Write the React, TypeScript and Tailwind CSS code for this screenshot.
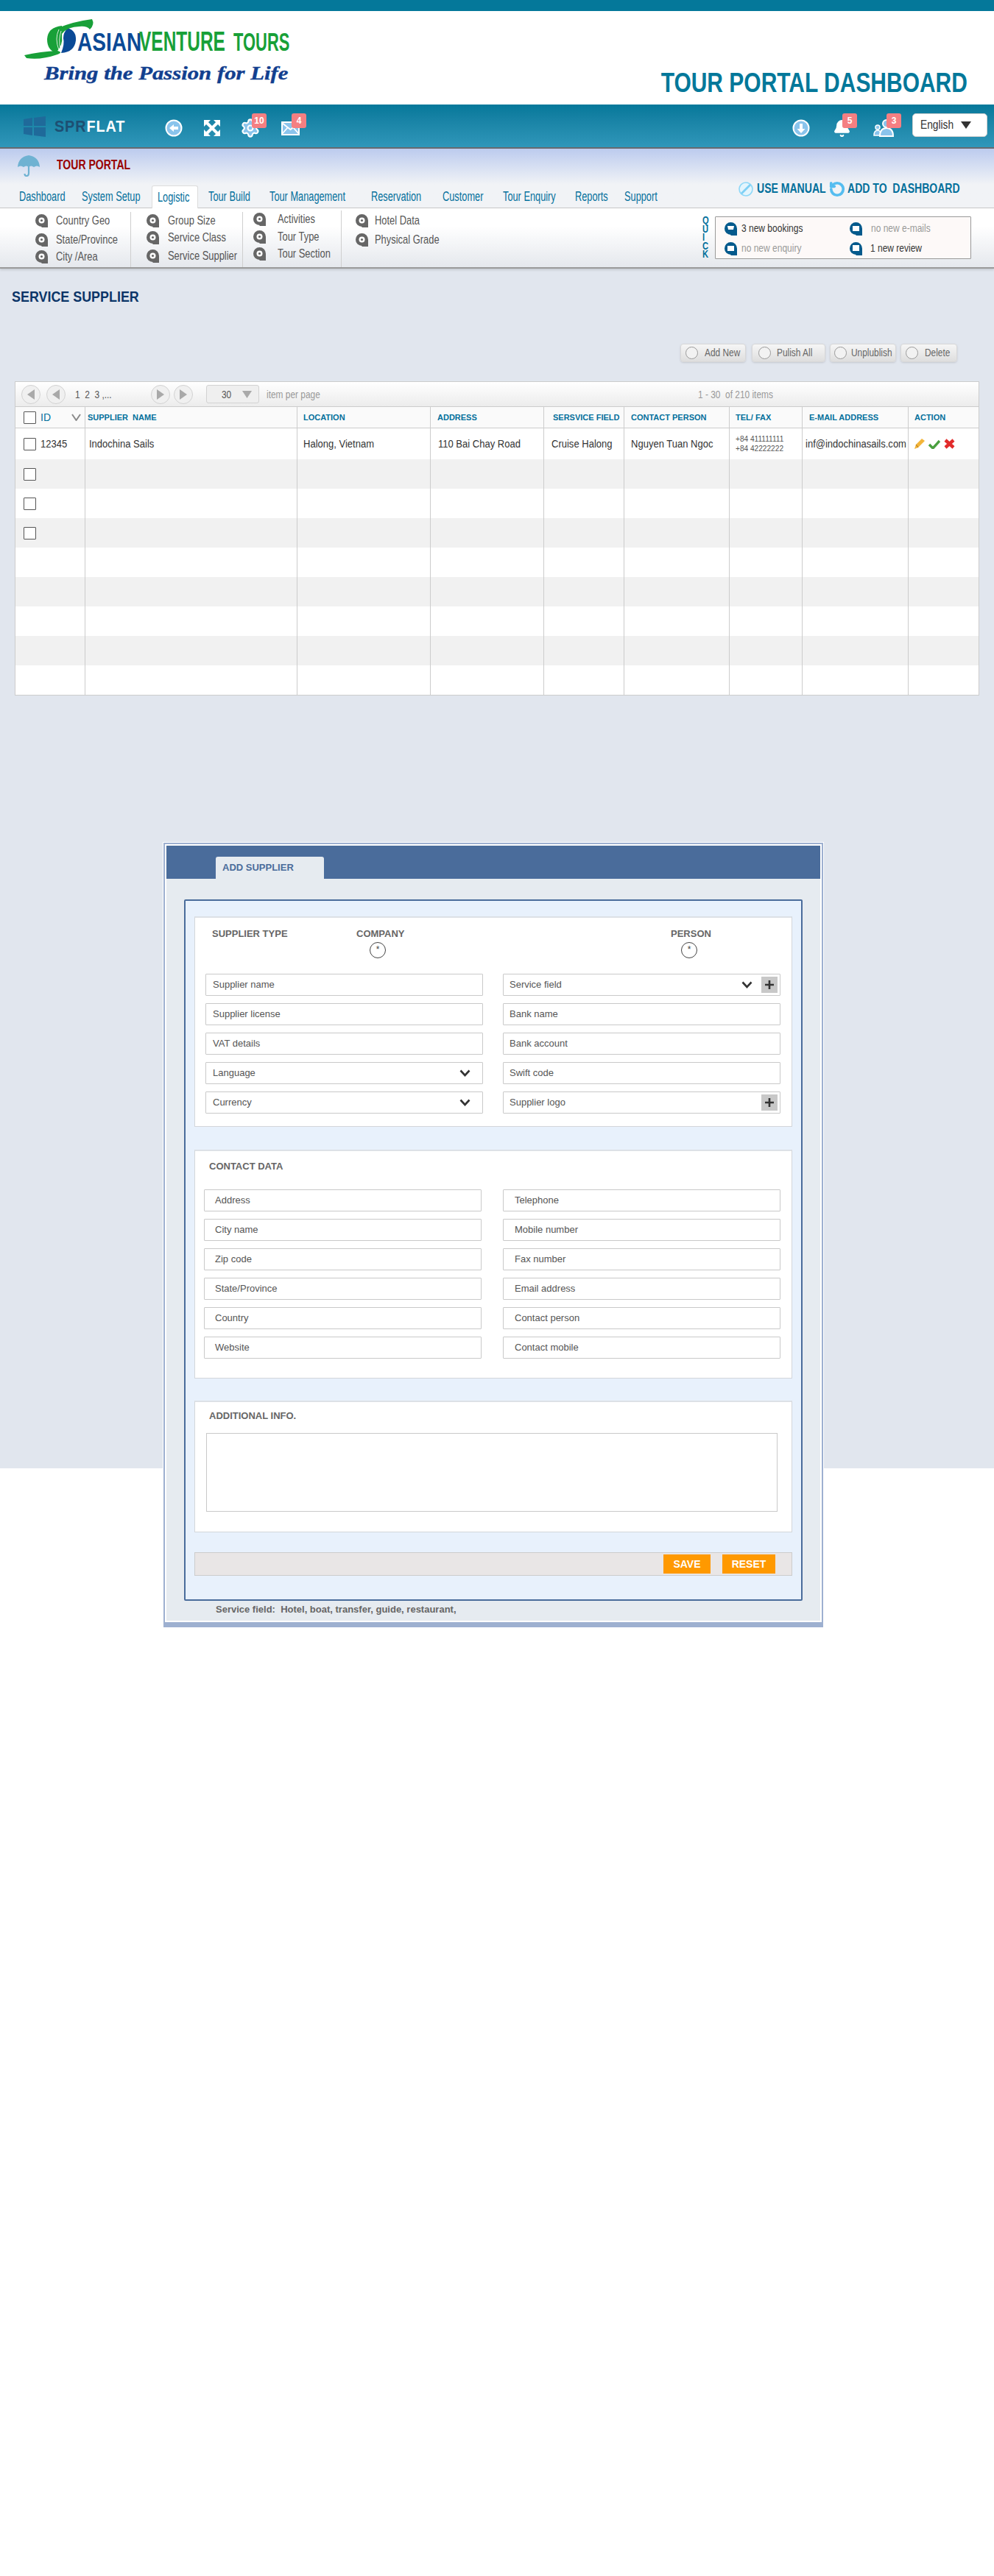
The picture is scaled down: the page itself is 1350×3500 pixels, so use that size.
import React from 'react';
import { Bell, RotateCcw, Settings } from 'lucide-react';

const navTabs = [
  { label: 'Dashboard', cell: 'w-[85px]' },
  { label: 'System Setup', cell: 'w-[95px]' },
  { label: 'Logistic', cell: 'w-[63px]', active: true },
  { label: 'Tour Build', cell: 'w-[83px] ml-[14px]' },
  { label: 'Tour Management', cell: 'w-[138px]' },
  { label: 'Reservation', cell: 'w-[97px]' },
  { label: 'Customer', cell: 'w-[82px]' },
  { label: 'Tour Enquiry', cell: 'w-[98px]' },
  { label: 'Reports', cell: 'w-[67px]' },
  { label: 'Support', cell: 'w-[80px]' },
];

const subMenus = [
  {
    col: 'w-[178px] pl-[48px] mt-[5px] border-r',
    gap: 'w-[11px]',
    items: [
      { label: 'Country Geo', cls: '' },
      { label: 'State/Province', cls: 'mt-[2px]' },
      { label: 'City /Area', cls: '-mt-px' },
    ],
  },
  {
    col: 'w-[152px] pl-[21px] mt-[5px] border-r',
    gap: 'w-[12px]',
    items: [
      { label: 'Group Size', cls: '' },
      { label: 'Service Class', cls: '-mt-px' },
      { label: 'Service Supplier', cls: 'mt-px' },
    ],
  },
  {
    col: 'w-[134px] pl-[14px] mt-[3px] border-r',
    gap: 'w-[16px]',
    items: [
      { label: 'Activities', cls: '' },
      { label: 'Tour Type', cls: '' },
      { label: 'Tour Section', cls: '-mt-px' },
    ],
  },
  {
    col: 'w-[150px] pl-[19px] mt-[5px]',
    gap: 'w-[9px]',
    items: [
      { label: 'Hotel Data', cls: '' },
      { label: 'Physical Grade', cls: 'mt-[2px]' },
    ],
  },
];

const companyFields = [
  { left: 'Supplier name', right: 'Service field', rightChevron: true, rightPlus: true },
  { left: 'Supplier license', right: 'Bank name' },
  { left: 'VAT details', right: 'Bank account' },
  { left: 'Language', leftChevron: true, right: 'Swift code' },
  { left: 'Currency', leftChevron: true, right: 'Supplier logo', rightPlus: true },
];

const contactFields = [
  ['Address', 'Telephone'],
  ['City name', 'Mobile number'],
  ['Zip code', 'Fax number'],
  ['State/Province', 'Email address'],
  ['Country', 'Contact person'],
  ['Website', 'Contact mobile'],
];

const tableCols = 'grid grid-cols-[94px_288px_181px_154px_109px_143px_99px_144px_1fr]';

function Cond({ children, className }: { children: React.ReactNode; className: string }) {
  return <span className={`inline-block shrink-0 whitespace-nowrap origin-left ${className}`}>{children}</span>;
}

function RowText({ children }: { children: React.ReactNode }) {
  return <Cond className="scale-x-[0.93] text-[14px] text-[#333]">{children}</Cond>;
}

function Logo() {
  return (
    <svg width="370" height="100" viewBox="30 20 370 100" className="ml-[30px] mt-[5px] shrink-0">
      <path d="M92 38 Q104 42 103 55 Q101 71 83 72 Q88 60 86 52 Q86 44 92 38Z" fill="#0b4a96" />
      <path d="M84 35 Q65 37 64 53 Q64 68 76 72 Q86 60 84 50 Q84 42 84 35Z" fill="#18a038" />
      <path d="M33 75 Q55 70 78 69 Q86 71 78 74 Q55 82 36 79Z" fill="#18a038" />
      <path d="M76 39 Q100 29 125 26 Q129 33 122 40 Q118 35 108 36 Q92 36 84 46 Q80 43 76 39Z" fill="#18a038" />
      <path d="M80 40 Q74 52 80 68 M83 42 Q79 54 82 66" stroke="#d8efdc" strokeWidth="1" fill="none" />
      <text transform="translate(105 69) scale(0.78 1)" fontSize="36" fontWeight="700" fontFamily="Liberation Sans" fill="#0b4a96">ASIAN</text>
      <text transform="translate(189 69) scale(0.68 1)" fontSize="36" fontWeight="700" fontFamily="Liberation Sans" fill="#18a038">VENTURE</text>
      <text transform="translate(317 69) scale(0.61 1)" fontSize="36" fontWeight="700" fontFamily="Liberation Sans" fill="#18a038">TOURS</text>
      <text transform="translate(60 108) scale(1.23 1)" fontSize="25" fontWeight="700" fontStyle="italic" fontFamily="Liberation Serif" fill="#123f8f" stroke="#123f8f" strokeWidth="0.4">Bring the Passion for Life</text>
    </svg>
  );
}

function Badge({ n, className }: { n: string; className: string }) {
  return (
    <span className={`absolute -top-2 flex h-5 w-5 items-center justify-center rounded-[3px] bg-[#f47f82] text-[12px] font-bold text-white ${className}`}>
      {n}
    </span>
  );
}

function Blob({ fill, children }: { fill: string; children?: React.ReactNode }) {
  return (
    <svg width="17" height="18" viewBox="0 0 17 18" className="shrink-0">
      <circle cx="8.5" cy="8.5" r="8.5" fill={fill} />
      <rect x="8.5" y="9" width="8.5" height="9" fill={fill} />
      {children}
    </svg>
  );
}

function Triangle({ dir }: { dir: 'left' | 'right' }) {
  return (
    <span className="flex h-[26px] w-[26px] shrink-0 items-center justify-center rounded-full border border-[#d2d2d2] bg-[#f0f0f0]">
      <svg width="10" height="14" viewBox="0 0 10 14">
        <path d={dir === 'left' ? 'M10 0 L0 7 L10 14Z' : 'M0 0 L10 7 L0 14Z'} fill="#a9a9a9" />
      </svg>
    </span>
  );
}

function Chevron() {
  return (
    <svg width="15" height="10" viewBox="0 0 15 10" className="shrink-0">
      <path d="M1.5 1.5 L7.5 8 L13.5 1.5" fill="none" stroke="#333" strokeWidth="2.6" />
    </svg>
  );
}

function PlusBox() {
  return (
    <span className="ml-[12px] flex h-[22px] w-[22px] shrink-0 items-center justify-center bg-[#c8c8c8]">
      <svg width="12" height="12" viewBox="0 0 12 12">
        <path d="M6 0 V12 M0 6 H12" stroke="#333" strokeWidth="2.6" />
      </svg>
    </span>
  );
}

function Field({ label, chevron, plus, pad }: { label: string; chevron?: boolean; plus?: boolean; pad: string }) {
  return (
    <div className={`flex h-[30px] items-center rounded-[1px] border border-[#c9c9c9] bg-white text-[13px] text-[#555] ${pad}`}>
      <span className="flex-1">{label}</span>
      {chevron && <Chevron />}
      {chevron && !plus && <span className="w-[16px]" />}
      {plus && <PlusBox />}
      {plus && <span className="w-[3px]" />}
    </div>
  );
}

function Radio() {
  return (
    <span className="flex h-[22px] w-[22px] justify-center rounded-full border border-[#444] bg-white pt-[2px] text-[12px] leading-[14px] font-normal text-[#444]">*</span>
  );
}

function ActionButton({ label, box, gap }: { label: string; box: string; gap: string }) {
  return (
    <div className={`flex h-[25px] items-center rounded-[4px] border border-[#d8d8d8] bg-linear-to-b from-[#f6f6f6] to-[#dedede] shadow-sm ${box}`}>
      <span className="h-[17px] w-[17px] shrink-0 rounded-full border border-[#999] bg-[#f2f2f2]" />
      <Cond className={`text-[14px] text-[#666] scale-x-[0.85] ${gap}`}>{label}</Cond>
    </div>
  );
}

function TableRow({ index }: { index: number }) {
  const first = index === 0;
  const bg = index % 2 === 1 ? 'bg-[#f1f1f1]' : 'bg-white';
  const cell = 'flex items-center border-l border-[#cccccc]';
  return (
    <div className={`${tableCols} ${first ? 'h-[42px]' : 'h-[40px]'} ${bg}`}>
      <div className="flex items-center pl-[11px]">
        {index < 4 && <span className="h-[17px] w-[17px] rounded-[1px] border border-[#555] bg-white" />}
        {first && <span className="ml-[6px]"><RowText>12345</RowText></span>}
      </div>
      <div className={`${cell} pl-[5px]`}>{first && <RowText>Indochina Sails</RowText>}</div>
      <div className={`${cell} pl-[8px]`}>{first && <RowText>Halong, Vietnam</RowText>}</div>
      <div className={`${cell} pl-[10px]`}>{first && <RowText>110 Bai Chay Road</RowText>}</div>
      <div className={`${cell} pl-[10px]`}>{first && <RowText>Cruise Halong</RowText>}</div>
      <div className={`${cell} pl-[9px]`}>{first && <RowText>Nguyen Tuan Ngoc</RowText>}</div>
      <div className={`${cell} pl-[8px]`}>
        {first && (
          <div className="flex flex-col text-[11px] leading-[13px] text-[#555]">
            <Cond className="scale-x-[0.92]">+84 411111111</Cond>
            <Cond className="scale-x-[0.92]">+84 42222222</Cond>
          </div>
        )}
      </div>
      <div className={`${cell} pl-[4px]`}>{first && <RowText>inf@indochinasails.com</RowText>}</div>
      <div className={`${cell} gap-[5px] pl-[8px]`}>
        {first && (
          <>
            <svg width="14" height="14" viewBox="0 0 14 14">
              <path d="M10 0 L14 3 L5 12 L0 14 L2 8Z" fill="#f3b53a" />
              <path d="M2 8 L5 12" stroke="#a8701b" strokeWidth="1" />
            </svg>
            <svg width="16" height="13" viewBox="0 0 16 13">
              <path d="M1 7 L6 12 L15 2" fill="none" stroke="#4a9f3f" strokeWidth="3.4" />
            </svg>
            <svg width="15" height="14" viewBox="0 0 15 14">
              <path d="M2 2 L13 12 M13 2 L2 12" fill="none" stroke="#e22b2b" strokeWidth="4.4" />
            </svg>
          </>
        )}
      </div>
    </div>
  );
}

export default function App() {
  return (
    <div className="font-['Liberation_Sans',sans-serif]">
      <div className="h-[15px] bg-[#04789a]" />

      {/* logo and title */}
      <header className="flex h-[127px] bg-white">
        <Logo />
        <div className="ml-auto mb-[7px] mr-[36px] flex h-[44px] items-center self-end">
          <span className="origin-right scale-x-[0.81] whitespace-nowrap text-[37px] font-bold text-[#04789a]">TOUR PORTAL DASHBOARD</span>
        </div>
      </header>

      {/* dark nav */}
      <div className="flex h-[60px] items-center border-b-2 border-[#666a70] bg-linear-to-b from-[#04789a] to-[#2f97ba] pb-[2px] pl-[32px] pr-[9px]">
        <svg width="30" height="28" viewBox="0 0 30 28" className="mt-[4px] shrink-0">
          <path d="M0 4 L12 2 V13 H0Z M14 2 L30 0 V13 H14Z M0 15 H12 V26 L0 24Z M14 15 H30 V28 L14 26Z" fill="#1f6a9a" />
        </svg>
        <div className="ml-[12px] flex w-[150px] items-center pt-[2px]">
          <Cond className="scale-x-[0.9] text-[22px] font-bold tracking-[1px]">
            <span className="text-[#1d4f73]">SPR</span>
            <span className="text-white">FLAT</span>
          </Cond>
        </div>
        <div className="relative mt-2 h-[24px] w-[22px]">
          <svg width="24" height="24" viewBox="0 0 24 24">
            <circle cx="12" cy="12" r="10.5" fill="#8ac4ec" stroke="#fff" strokeWidth="2" />
            <path d="M6 12 L12 7 V10 H18 V14 H12 V17Z" fill="#fff" />
          </svg>
        </div>
        <div className="relative ml-[30px] mt-2 h-[24px] w-[22px]">
          <svg width="24" height="24" viewBox="0 0 24 24">
            <path d="M5 5 L19 19 M19 5 L5 19" stroke="#fff" strokeWidth="4" />
            <path d="M1 1 H10 L1 10Z M23 1 V10 L14 1Z M1 23 V14 L10 23Z M23 23 H14 L23 14Z" fill="#fff" />
          </svg>
        </div>
        <div className="relative ml-[31px] mt-2 h-[24px] w-[22px]">
          <Settings size={28} color="#fff" fill="#8ac4ec" strokeWidth={1.8} className="-ml-[3px] -mt-[2px]" />
          <Badge n="10" className="left-[13px]" />
        </div>
        <div className="relative ml-[31px] mt-2 h-[24px] w-[24px]">
          <svg width="25" height="24" viewBox="0 0 25 24">
            <rect x="1" y="4" width="23" height="17" fill="#8ac4ec" stroke="#fff" strokeWidth="2" />
            <path d="M1 5 L12.5 14 L24 5 M1 20 L9 11 M24 20 L16 11" fill="none" stroke="#fff" strokeWidth="1.8" />
          </svg>
          <Badge n="4" className="left-[14px]" />
        </div>

        <div className="relative ml-auto mt-2 h-[24px] w-[24px]">
          <svg width="24" height="24" viewBox="0 0 24 24">
            <circle cx="12" cy="12" r="10.5" fill="#8ac4ec" stroke="#fff" strokeWidth="2" />
            <path d="M12 19 L6.5 13 H10 V6 H14 V13 H17.5Z" fill="#fff" />
          </svg>
        </div>
        <div className="relative ml-[31px] mt-2 h-[24px] w-[24px]">
          <Bell size={25} color="#fff" fill="#fff" strokeWidth={2} />
          <Badge n="5" className="left-[13px]" />
        </div>
        <div className="relative ml-[31px] mt-2 h-[24px] w-[28px]">
          <svg width="28" height="24" viewBox="0 0 28 24">
            <circle cx="6" cy="11" r="3" fill="#8ac4ec" stroke="#fff" strokeWidth="1.5" />
            <path d="M1 22 Q1 15 6 15 Q9 15 10 18 L9 22Z" fill="#8ac4ec" stroke="#fff" strokeWidth="1.5" />
            <circle cx="18" cy="6" r="5" fill="#8ac4ec" stroke="#fff" strokeWidth="2" />
            <path d="M9 23 Q9 12 18 12 Q27 12 27 23Z" fill="#8ac4ec" stroke="#fff" strokeWidth="2" />
          </svg>
          <Badge n="3" className="left-[18px]" />
        </div>
        <div className="ml-[25px] flex h-[32px] w-[102px] items-center rounded-[5px] border border-[#cfcfcf] bg-white pl-[10px]">
          <span className="w-[55px]">
            <Cond className="scale-x-[0.86] text-[16px] text-[#333]">English</Cond>
          </span>
          <svg width="14" height="10" viewBox="0 0 14 10">
            <path d="M0 0 H14 L7 10Z" fill="#333" />
          </svg>
        </div>
      </div>

      {/* tour portal + tabs */}
      <div className="bg-linear-to-b from-[#bccbee] to-[#f1f3f6] to-60%">
        <div className="flex h-[50px] items-start pl-[24px] pt-[8px]">
          <svg width="30" height="30" viewBox="0 0 30 30" className="shrink-0">
            <path d="M0 17 Q1 3 15 1 Q29 3 30 17 Q26 14 22 17 Q18 14 15 17 Q12 14 8 17 Q4 14 0 17Z" fill="#6fb2d2" />
            <path d="M15 15 V25 Q15 29 12 29 Q9.5 29 9.5 26" fill="none" stroke="#6fb2d2" strokeWidth="2.2" />
          </svg>
          <span className="ml-[23px] mt-[1px] flex h-[26px] items-center">
            <Cond className="scale-x-[0.78] text-[18px] font-bold text-[#990000]">TOUR PORTAL</Cond>
          </span>
        </div>
        <div className="flex h-[31px] items-center border-b border-[#c9c9c9] pl-[26px] pr-[46px]">
          {navTabs.map((tab) =>
            tab.active ? (
              <div key={tab.label} className={`-mb-px flex h-[31px] shrink-0 items-center rounded-t-[3px] border border-b-0 border-[#dcdcdc] bg-white pl-[7px] ${tab.cell}`}>
                <Cond className="scale-x-[0.71] text-[18px] text-[#04709c]">{tab.label}</Cond>
              </div>
            ) : (
              <div key={tab.label} className={`shrink-0 ${tab.cell}`}>
                <Cond className="scale-x-[0.71] text-[18px] text-[#04709c]">{tab.label}</Cond>
              </div>
            ),
          )}
          <div className="-mt-[21px] ml-auto flex h-[20px] items-center">
            <svg width="20" height="20" viewBox="0 0 20 20" className="mr-[5px] shrink-0">
              <circle cx="10" cy="10" r="9" fill="#e4f5fd" stroke="#8fd8f8" strokeWidth="1.6" />
              <path d="M3 15 L15 3 L17 5 L5 17Z" fill="#7fd0f5" />
            </svg>
            <span className="w-[98px]">
              <Cond className="scale-x-[0.78] text-[18px] font-bold text-[#04709c]">USE MANUAL</Cond>
            </span>
            <RotateCcw size={22} color="#55bdf0" strokeWidth={4} className="mr-[3px] shrink-0" />
            <span className="w-[153px]">
              <Cond className="scale-x-[0.78] text-[18px] font-bold text-[#04709c]">ADD TO&nbsp; DASHBOARD</Cond>
            </span>
          </div>
        </div>
      </div>

      {/* sub menu */}
      <div className="relative z-10 flex h-[82px] border-b-2 border-[#9a9a9a] bg-linear-to-b from-white from-30% to-[#e5e8ed] shadow-[0_2px_3px_rgba(0,0,0,0.12)]">
        {subMenus.map((menu, i) => (
          <div key={i} className={`border-[#cfcfcf] ${menu.col}`}>
            {menu.items.map((item) => (
              <div key={item.label} className={`flex h-[24px] items-center ${item.cls}`}>
                <Blob fill="#666">
                  <circle cx="8.5" cy="8.5" r="4" fill="#fff" />
                  <circle cx="8.5" cy="8.5" r="1.6" fill="#666" />
                </Blob>
                <span className={`shrink-0 ${menu.gap}`} />
                <Cond className="scale-x-[0.76] text-[17px] text-[#555]">{item.label}</Cond>
              </div>
            ))}
          </div>
        ))}
        <div className="ml-auto mr-[31px] mt-[11px] flex h-[58px]">
          <div className="mr-[8px] flex w-[9px] flex-col text-[14px] font-bold leading-[11.6px] text-[#04709c]">
            {['Q', 'U', 'I', 'C', 'K'].map((c) => (
              <Cond key={c} className="scale-x-[0.8]">{c}</Cond>
            ))}
          </div>
          <div className="grid w-[348px] grid-cols-[170px_1fr] grid-rows-[27px_27px] rounded-[1px] border border-[#999] bg-[#fdf9f8] pl-[12px] pt-[2px]">
            <div className="flex items-center">
              <Blob fill="#045a8c"><path d="M4 5 H13 L12 10 H5Z" fill="#fff" /></Blob>
              <span className="w-[6px]" />
              <Cond className="scale-x-[0.8] text-[15px] text-[#333]">3 new bookings</Cond>
            </div>
            <div className="flex items-center">
              <Blob fill="#045a8c"><rect x="4" y="5" width="9" height="7" fill="#fff" /></Blob>
              <span className="w-[12px]" />
              <Cond className="scale-x-[0.8] text-[15px] text-[#999]">no new e-mails</Cond>
            </div>
            <div className="flex items-center">
              <Blob fill="#045a8c"><rect x="4" y="5" width="9" height="7" fill="#fff" /></Blob>
              <span className="w-[6px]" />
              <Cond className="scale-x-[0.8] text-[15px] text-[#999]">no new enquiry</Cond>
            </div>
            <div className="flex items-center">
              <Blob fill="#045a8c"><rect x="4" y="4" width="9" height="8" fill="#fff" /></Blob>
              <span className="w-[11px]" />
              <Cond className="scale-x-[0.8] text-[15px] text-[#333]">1 new review</Cond>
            </div>
          </div>
        </div>
      </div>

      {/* main: the grey page stops at 1630px, the panel runs past it */}
      <main className="bg-[linear-gradient(to_bottom,#e1e6ee_1630px,#ffffff_1630px)] pt-[26px]">
        <div className="ml-[16px] flex h-[24px] items-center">
          <h1>
            <Cond className="scale-x-[0.895] text-[20px] font-bold text-[#0b3568]">SERVICE SUPPLIER</Cond>
          </h1>
        </div>

        <div className="mt-[52px] flex justify-end gap-[6px] pr-[50px]">
          <ActionButton label="Add New" box="mr-[2px] w-[89px] pl-[6px]" gap="ml-[9px]" />
          <ActionButton label="Pulish All" box="w-[100px] pl-[8px]" gap="ml-[8px]" />
          <ActionButton label="Unplublish" box="w-[90px] pl-[5px]" gap="ml-[6px]" />
          <ActionButton label="Delete" box="w-[77px] pl-[6px]" gap="ml-[9px]" />
        </div>

        {/* table */}
        <div className="ml-[20px] mt-[26px] w-[1310px] border border-[#cccccc]">
          <div className="flex h-[33px] items-center bg-linear-to-b from-white to-[#ececec] pl-[8px]">
            <Triangle dir="left" />
            <span className="ml-[8px]"><Triangle dir="left" /></span>
            <span className="ml-[13px] w-[103px]">
              <Cond className="scale-x-[0.85] text-[14px] text-[#555]">1&nbsp; 2&nbsp; 3 ,...</Cond>
            </span>
            <Triangle dir="right" />
            <span className="ml-[5px]"><Triangle dir="right" /></span>
            <div className="ml-[18px] flex h-[25px] w-[72px] items-center rounded-[3px] border border-[#d2d2d2] bg-[#efefef] pl-[20px]">
              <span className="w-[28px]">
                <Cond className="scale-x-[0.85] text-[14px] text-[#555]">30</Cond>
              </span>
              <svg width="13" height="10" viewBox="0 0 13 10">
                <path d="M0 0 H13 L6.5 10Z" fill="#a9a9a9" />
              </svg>
            </div>
            <span className="ml-[10px]">
              <Cond className="scale-x-[0.85] text-[14px] text-[#999]">item per page</Cond>
            </span>
            <span className="ml-auto mr-[279px] w-[102px]">
              <Cond className="scale-x-[0.85] text-[14px] text-[#999]">1 - 30&nbsp; of 210 items</Cond>
            </span>
          </div>
          <div className={`${tableCols} h-[30px] border-y border-[#cccccc] bg-[#fafafa] text-[11px] font-bold text-[#04709c]`}>
            <div className="flex items-center pl-[11px]">
              <span className="h-[17px] w-[17px] rounded-[1px] border border-[#555] bg-white" />
              <span className="ml-[6px] w-[42px] text-[14px] font-normal">ID</span>
              <svg width="13" height="10" viewBox="0 0 13 10">
                <path d="M1 1 L6.5 9 L12 1" fill="none" stroke="#8a8a8a" strokeWidth="2" />
              </svg>
            </div>
            <div className="flex items-center border-l border-[#cccccc] pl-[3px]">SUPPLIER&nbsp; NAME</div>
            <div className="flex items-center border-l border-[#cccccc] pl-[8px]">LOCATION</div>
            <div className="flex items-center border-l border-[#cccccc] pl-[9px]">ADDRESS</div>
            <div className="flex items-center border-l border-[#cccccc] pl-[12px]">SERSVICE FIELD</div>
            <div className="flex items-center border-l border-[#cccccc] pl-[9px]">CONTACT PERSON</div>
            <div className="flex items-center border-l border-[#cccccc] pl-[8px]">TEL/ FAX</div>
            <div className="flex items-center border-l border-[#cccccc] pl-[9px]">E-MAIL ADDRESS</div>
            <div className="flex items-center border-l border-[#cccccc] pl-[8px]">ACTION</div>
          </div>
          {[0, 1, 2, 3, 4, 5, 6, 7, 8].map((i) => (
            <TableRow key={i} index={i} />
          ))}
        </div>

        {/* add supplier panel */}
        <div className="ml-[221px] mt-[199px] w-[898px] border border-white">
          <div className="border-x-2 border-b-[7px] border-t-2 border-[#9db0d0]">
            <div className="border-2 border-white bg-[#e6ebf0]">
              <div className="flex h-[45px] items-end bg-[#4a6c9b] pl-[67px]">
                <div className="flex h-[30px] w-[147px] items-center rounded-t-[3px] bg-[#e6ebf0] pl-[9px] text-[13px] font-bold text-[#4a6c9b]">ADD SUPPLIER</div>
              </div>

              <div className="ml-[24px] mt-[28px] w-[840px] rounded-[2px] border-2 border-[#4a6c9b] bg-[#e8f1fc] px-[12px] pb-[32px] pt-[21px]">
                <section className="border border-t-2 border-[#d3d6da] border-t-[#dde1e6] bg-white pb-[17px] pl-[14px] pt-[14px]">
                  <div className="flex text-[13px] font-bold leading-[16px] text-[#666]">
                    <div className="ml-[9px] w-[196px]">SUPPLIER TYPE</div>
                    <div className="w-[427px]">
                      <div>COMPANY</div>
                      <div className="ml-[18px] mt-[3px]"><Radio /></div>
                    </div>
                    <div>
                      <div>PERSON</div>
                      <div className="ml-[14px] mt-[3px]"><Radio /></div>
                    </div>
                  </div>
                  <div className="mt-[21px] grid w-[781px] grid-cols-2 gap-x-[27px] gap-y-[10px]">
                    {companyFields.map((row) => (
                      <React.Fragment key={row.left}>
                        <Field label={row.left} chevron={row.leftChevron} pad="pl-[9px]" />
                        <Field label={row.right} chevron={row.rightChevron} plus={row.rightPlus} pad="pl-[8px]" />
                      </React.Fragment>
                    ))}
                  </div>
                </section>

                <section className="mt-[31px] border border-t-2 border-[#d3d6da] border-t-[#dde1e6] bg-white pb-[26px] pl-[12px] pt-[13px]">
                  <div className="ml-[7px] text-[13px] font-bold leading-[16px] text-[#666]">CONTACT DATA</div>
                  <div className="mt-[23px] grid w-[783px] grid-cols-2 gap-x-[29px] gap-y-[10px]">
                    {contactFields.map((row) => (
                      <React.Fragment key={row[0]}>
                        <Field label={row[0]} pad="pl-[14px]" />
                        <Field label={row[1]} pad="pl-[15px]" />
                      </React.Fragment>
                    ))}
                  </div>
                </section>

                <section className="mt-[30px] border border-t-2 border-[#d3d6da] border-t-[#dde1e6] bg-white pb-[27px] pl-[15px] pt-[11px]">
                  <div className="ml-[4px] text-[13px] font-bold leading-[16px] text-[#666]">ADDITIONAL INFO.</div>
                  <div className="mt-[15px] h-[107px] w-[776px] border border-[#c9c9c9] bg-white" />
                </section>

                <div className="mt-[27px] flex h-[32px] items-center justify-end gap-[16px] border border-[#cccccc] bg-[#e9e6e6] pr-[22px]">
                  <button className="flex h-[26px] w-[64px] items-center justify-center bg-[#ff9900] text-[14px] font-bold text-white">SAVE</button>
                  <button className="flex h-[26px] w-[72px] items-center justify-center bg-[#ff9900] text-[14px] font-bold text-white">RESET</button>
                </div>
              </div>

              <div className="mb-[3px] flex h-[24px] items-center pl-[67px] text-[13px] font-bold text-[#666]">
                Service field:&nbsp; Hotel, boat, transfer, guide, restaurant,
              </div>
            </div>
          </div>
        </div>
      </main>
    </div>
  );
}
